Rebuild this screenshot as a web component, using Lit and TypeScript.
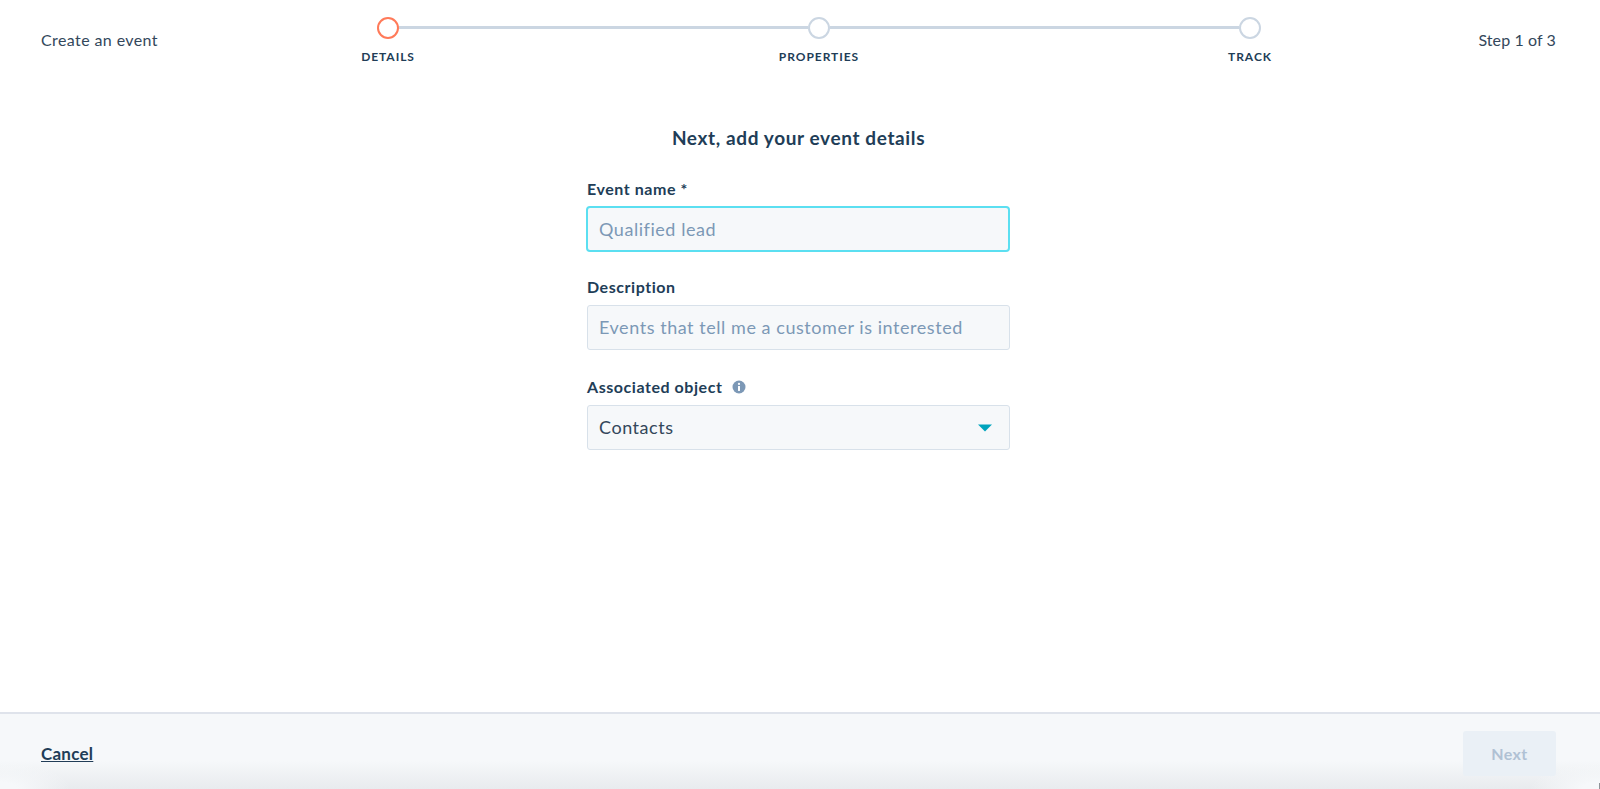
import { LitElement, html, css } from "lit";
import { customElement } from "lit/decorators.js";

@customElement("app-root")
export class AppRoot extends LitElement {
  static styles = css`
    :host {
      display: flex;
      flex-direction: column;
      height: 100vh;
      min-height: 789px;
      background: #fff;
      color: #33475b;
      font-family: "Lato", "Open Sans", sans-serif;
      font-size: 16px;
      overflow: hidden;
    }
    .header {
      display: flex;
      align-items: flex-start;
      height: 90px;
      padding: 0 44px 0 41px;
      box-sizing: border-box;
      flex: none;
    }
    .side {
      margin-top: 30px;
      font-size: 16px;
      line-height: 20px;
      letter-spacing: 0.4px;
      color: #33475b;
      white-space: nowrap;
    }
    .side.right { margin-left: auto; letter-spacing: 0.1px; }
    .title { width: 336px; flex: none; }
    .stepper {
      display: flex;
      width: 884px;
      flex: none;
      margin-top: 17px;
    }
    .step {
      width: 22px;
      flex: none;
      display: flex;
      flex-direction: column;
      align-items: center;
    }
    .dot {
      width: 22px;
      height: 22px;
      box-sizing: border-box;
      border: 2px solid #cbd6e2;
      border-radius: 50%;
      background: #fff;
      flex: none;
    }
    .step.active .dot { border-color: #ff7a59; }
    .step-label {
      margin-top: 10px;
      font-size: 12px;
      line-height: 16px;
      font-weight: 700;
      letter-spacing: 0.95px;
      color: #213d57;
      white-space: nowrap;
    }
    .line {
      flex: 1;
      height: 3px;
      margin-top: 9px;
      background: #cbd6e2;
    }
    .main {
      flex: 1;
      display: flex;
      flex-direction: column;
      align-items: center;
      padding-top: 37px;
    }
    .form {
      width: 423px;
      margin-left: -3px;
      display: flex;
      flex-direction: column;
    }
    h1 {
      margin: 0 0 30px;
      font-size: 19px;
      line-height: 22px;
      font-weight: 700;
      letter-spacing: 0.62px;
      color: #213d57;
      text-align: center;
    }
    .field { display: flex; flex-direction: column; margin-bottom: 27px; }
    .field.first { margin-bottom: 25px; }
    .lbl {
      display: flex;
      align-items: center;
      gap: 10px;
      font-size: 16px;
      line-height: 20px;
      font-weight: 700;
      letter-spacing: 0.55px;
      color: #213d57;
      margin-bottom: 8px;
    }
    .first .lbl { margin-bottom: 7px; }
    .input {
      height: 45px;
      box-sizing: border-box;
      border: 1.5px solid #d8e1ea;
      border-radius: 3px;
      background: #f6f8fa;
      padding: 0 11px 2px;
      display: flex;
      align-items: center;
      justify-content: space-between;
      font-size: 18px;
      letter-spacing: 0.55px;
      color: #33475b;
    }
    .input.ph { color: #7c98b6; }
    .input.focus {
      height: 46px;
      margin: 0 0 0 -1px;
      border: 2px solid #5bdff1;
      border-radius: 4px;
      padding: 0 10px 1px 11px;
    }
    .caret { margin: 2px 6px 0 0; }
    .footer {
      flex: none;
      height: 77px;
      box-sizing: border-box;
      border-top: 2px solid #dfe3eb;
      background:
        linear-gradient(#8f9499, #8f9499) no-repeat right bottom / 1px 6px,
        radial-gradient(ellipse 70px 27px at 0 100%, #f6f8fa 25%, rgba(246, 248, 250, 0)),
        radial-gradient(ellipse 70px 27px at 100% 100%, #f6f8fa 25%, rgba(246, 248, 250, 0)),
        linear-gradient(rgba(232, 235, 238, 0) 62%, #e8ebee 100%),
        #f6f8fa;
      display: flex;
      align-items: flex-start;
      justify-content: space-between;
      padding: 17px 44px 0 41px;
    }
    .cancel {
      font-size: 17px;
      line-height: 45px;
      font-weight: 700;
      letter-spacing: 0.25px;
      color: #213d57;
      text-decoration: underline;
    }
    .next {
      width: 93px;
      height: 45px;
      border: none;
      border-radius: 3px;
      background: #eaf0f6;
      color: #b0c1d4;
      font-family: inherit;
      font-size: 16px;
      font-weight: 700;
      letter-spacing: 0.4px;
    }
  `;

  render() {
    return html`
      <div class="header">
        <div class="side title">Create an event</div>
        <div class="stepper">
          <div class="step active"><div class="dot"></div><div class="step-label">DETAILS</div></div>
          <div class="line"></div>
          <div class="step"><div class="dot"></div><div class="step-label">PROPERTIES</div></div>
          <div class="line"></div>
          <div class="step"><div class="dot"></div><div class="step-label">TRACK</div></div>
        </div>
        <div class="side right">Step 1 of 3</div>
      </div>
      <div class="main">
        <div class="form">
          <h1>Next, add your event details</h1>
          <div class="field first">
            <div class="lbl">Event name *</div>
            <div class="input ph focus">Qualified lead</div>
          </div>
          <div class="field">
            <div class="lbl">Description</div>
            <div class="input ph">Events that tell me a customer is interested</div>
          </div>
          <div class="field">
            <div class="lbl">
              Associated object
              <svg width="14" height="14" viewBox="0 0 14 14">
                <circle cx="7" cy="7" r="6.5" fill="#7c98b6"></circle>
                <circle cx="7" cy="3.9" r="1.1" fill="#fff"></circle>
                <rect x="6" y="5.9" width="2" height="5" rx="0.4" fill="#fff"></rect>
              </svg>
            </div>
            <div class="input">
              Contacts
              <svg class="caret" width="14" height="8" viewBox="0 0 14 8">
                <path d="M0 0.5h14L7 7.5z" fill="#00a4bd"></path>
              </svg>
            </div>
          </div>
        </div>
      </div>
      <div class="footer">
        <div class="cancel">Cancel</div>
        <button class="next">Next</button>
      </div>
    `;
  }
}
